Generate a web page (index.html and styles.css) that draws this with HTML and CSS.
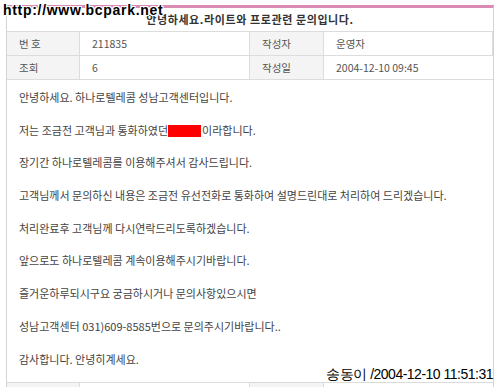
FILE: index.html
```
<!doctype html>
<html>
 <head>
  <title>문의게시판</title>
  <meta charset="utf-8">
  <link rel="stylesheet" href="styles.css">
 </head>
 <body>
  <div class="mark">http://www.bcpark.net</div>
  <div class="board">
   <div class="title">안녕하세요.라이트와 프로관련 문의입니다.</div>
   <div class="meta">
    <div class="label">번 호</div>
    <div class="value">211835</div>
    <div class="label">작성자</div>
    <div class="value">운영자</div>
    <div class="label">조회</div>
    <div class="value">6</div>
    <div class="label">작성일</div>
    <div class="value">2004-12-10 09:45</div>
   </div>
   <div class="content">
    <p>안녕하세요. 하나로텔레콤 성남고객센터입니다.</p>
    <p>저는 조금전 고객님과 통화하였던<span class="hidden"></span>이라합니다.</p>
    <p>장기간 하나로텔레콤를 이용해주셔서 감사드립니다.</p>
    <p>고객님께서 문의하신 내용은 조금전 유선전화로 통화하여 설명드린대로 처리하여 드리겠습니다.</p>
    <p>처리완료후 고객님께 다시연락드리도록하겠습니다.</p>
    <p>앞으로도 하나로텔레콤 계속이용해주시기바랍니다.</p>
    <p>즐거운하루되시구요 궁금하시거나 문의사항있으시면</p>
    <p>성남고객센터 031)609-8585번으로 문의주시기바랍니다..</p>
    <p>감사합니다. 안녕히계세요.</p>
    <div class="stamp">송동이 /2004-12-10 11:51:31</div>
   </div>
   <div class="meta">
    <div class="label">&nbsp;</div>
    <div class="value">&nbsp;</div>
    <div class="label">&nbsp;</div>
    <div class="value">&nbsp;</div>
   </div>
  </div>
 </body>
</html>
```
FILE: styles.css
```
body {
 margin: 0;
 height: 387px;
 background: #fff;
 color: #444;
 font-family: "Noto Sans CJK KR", "Liberation Sans", sans-serif;
 font-size: 11px;
 overflow: hidden;
}
.mark {
 position: absolute;
 top: 2px;
 left: 3px;
 z-index: 2;
 font-family: "Liberation Sans", sans-serif;
 font-weight: bold;
 font-size: 14px;
 letter-spacing: 0.7px;
 color: #000;
 text-shadow: 1px 0 #fff, -1px 0 #fff, 0 1px #fff, 0 -1px #fff, 1px 1px #fff, -1px -1px #fff, 1px -1px #fff, -1px 1px #fff;
}
.board {
 margin: 5px 6px 0;
 border-top: 3px solid #d98bb3;
 border-left: 1px solid #d4d4d4;
 border-right: 1px solid #d4d4d4;
}
.title {
 height: 23px;
 line-height: 23px;
 text-align: center;
 font-weight: bold;
 font-size: 11px;
 color: #333;
 letter-spacing: 0.6px;
 border-bottom: 1px solid #dcdcdc;
}
.meta {
 display: grid;
 grid-template-columns: 73px 170px 74px 1fr;
}
.meta div {
 height: 23px;
 line-height: 23px;
 padding-left: 12px;
 font-size: 10.5px;
 border-bottom: 1px solid #dcdcdc;
}
.label {
 background: #f4f4f4;
 border-right: 1px solid #dcdcdc;
 color: #555;
}
.value {
 border-right: 1px solid #dcdcdc;
 color: #555;
}
.meta .value:last-child {
 border-right: none;
}
.content {
 position: relative;
 height: 293px;
 padding: 9px 12px 0;
 border-bottom: 1px solid #dcdcdc;
}
.content p {
 margin: 0 0 16.4px;
 line-height: 16.3px;
 white-space: nowrap;
}
.hidden {
 display: inline-block;
 width: 33px;
 height: 12px;
 margin-right: 1px;
 vertical-align: -2px;
 background: #f00;
}
.stamp {
 position: absolute;
 right: 0;
 bottom: 0;
 font-family: "Liberation Sans", sans-serif;
 font-size: 14px;
 letter-spacing: -0.5px;
 color: #000;
 line-height: 16px;
}
```
